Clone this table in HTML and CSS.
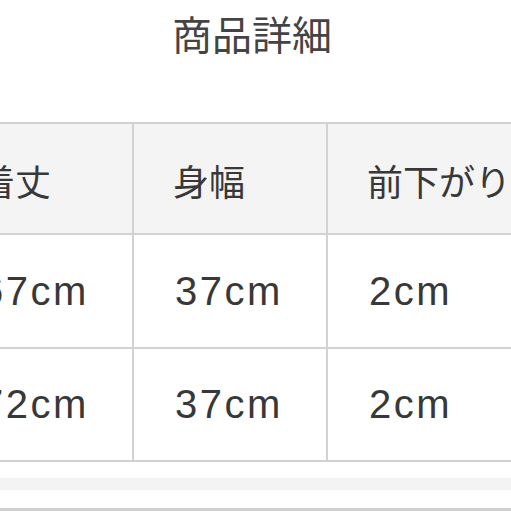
FILE: index.html
```html
<!DOCTYPE html>
<html lang="ja">
<head>
<meta charset="utf-8">
<title>商品詳細</title>
<link rel="stylesheet" href="styles.css">
</head>
<body>
<div class="page">
  <h1 class="title">商品詳細</h1>
  <div class="table">
    <div class="cell head">着丈</div>
    <div class="cell head">身幅</div>
    <div class="cell head">前下がり</div>
    <div class="cell head">袖丈</div>
    <div class="cell r1 num">67cm</div>
    <div class="cell r1 num">37cm</div>
    <div class="cell r1 num">2cm</div>
    <div class="cell r1 num">20cm</div>
    <div class="cell r2 num">72cm</div>
    <div class="cell r2 num">37cm</div>
    <div class="cell r2 num">2cm</div>
    <div class="cell r2 num">20cm</div>
  </div>
  <div class="after">
    <div class="band"></div>
    <div class="rule"></div>
  </div>
</div>
</body>
</html>
```
FILE: styles.css
```css
html, body {
  margin: 0;
  padding: 0;
  background: #ffffff;
  overflow: hidden;
}
.page {
  width: 511px;
  height: 511px;
  overflow: hidden;
  font-family: "Liberation Sans", "Noto Sans CJK JP", sans-serif;
  color: #383838;
}
.title {
  margin: 0;
  padding: 13px 7px 0 0;
  height: 40px;
  line-height: 40px;
  font-size: 40px;
  font-weight: 400;
  text-align: center;
  color: #444444;
  font-family: "Noto Sans CJK JP", sans-serif;
}
.table {
  margin-top: 69px;
  margin-left: -60px;
  width: 776px;
  display: grid;
  grid-template-columns: repeat(4, 194px);
  border-top: 2px solid #d2d2d2;
}
.cell {
  box-sizing: border-box;
  border-right: 2px solid #d2d2d2;
  border-bottom: 2px solid #d2d2d2;
  padding-left: 39px;
  display: flex;
  align-items: center;
  white-space: nowrap;
}
.head {
  height: 111px;
  background: #f4f4f4;
  font-family: "Noto Sans CJK JP", sans-serif;
  font-size: 36px;
  padding-top: 2px;
}
.num {
  font-size: 40px;
  letter-spacing: 2.5px;
  padding-left: 41px;
}
.r1 {
  height: 114px;
}
.r2 {
  height: 113px;
}
.after {
  padding-top: 16px;
}
.band {
  height: 12px;
  background: #f3f3f3;
}
.rule {
  margin-top: 18px;
  height: 3px;
  background: #d0d0d0;
}
```
